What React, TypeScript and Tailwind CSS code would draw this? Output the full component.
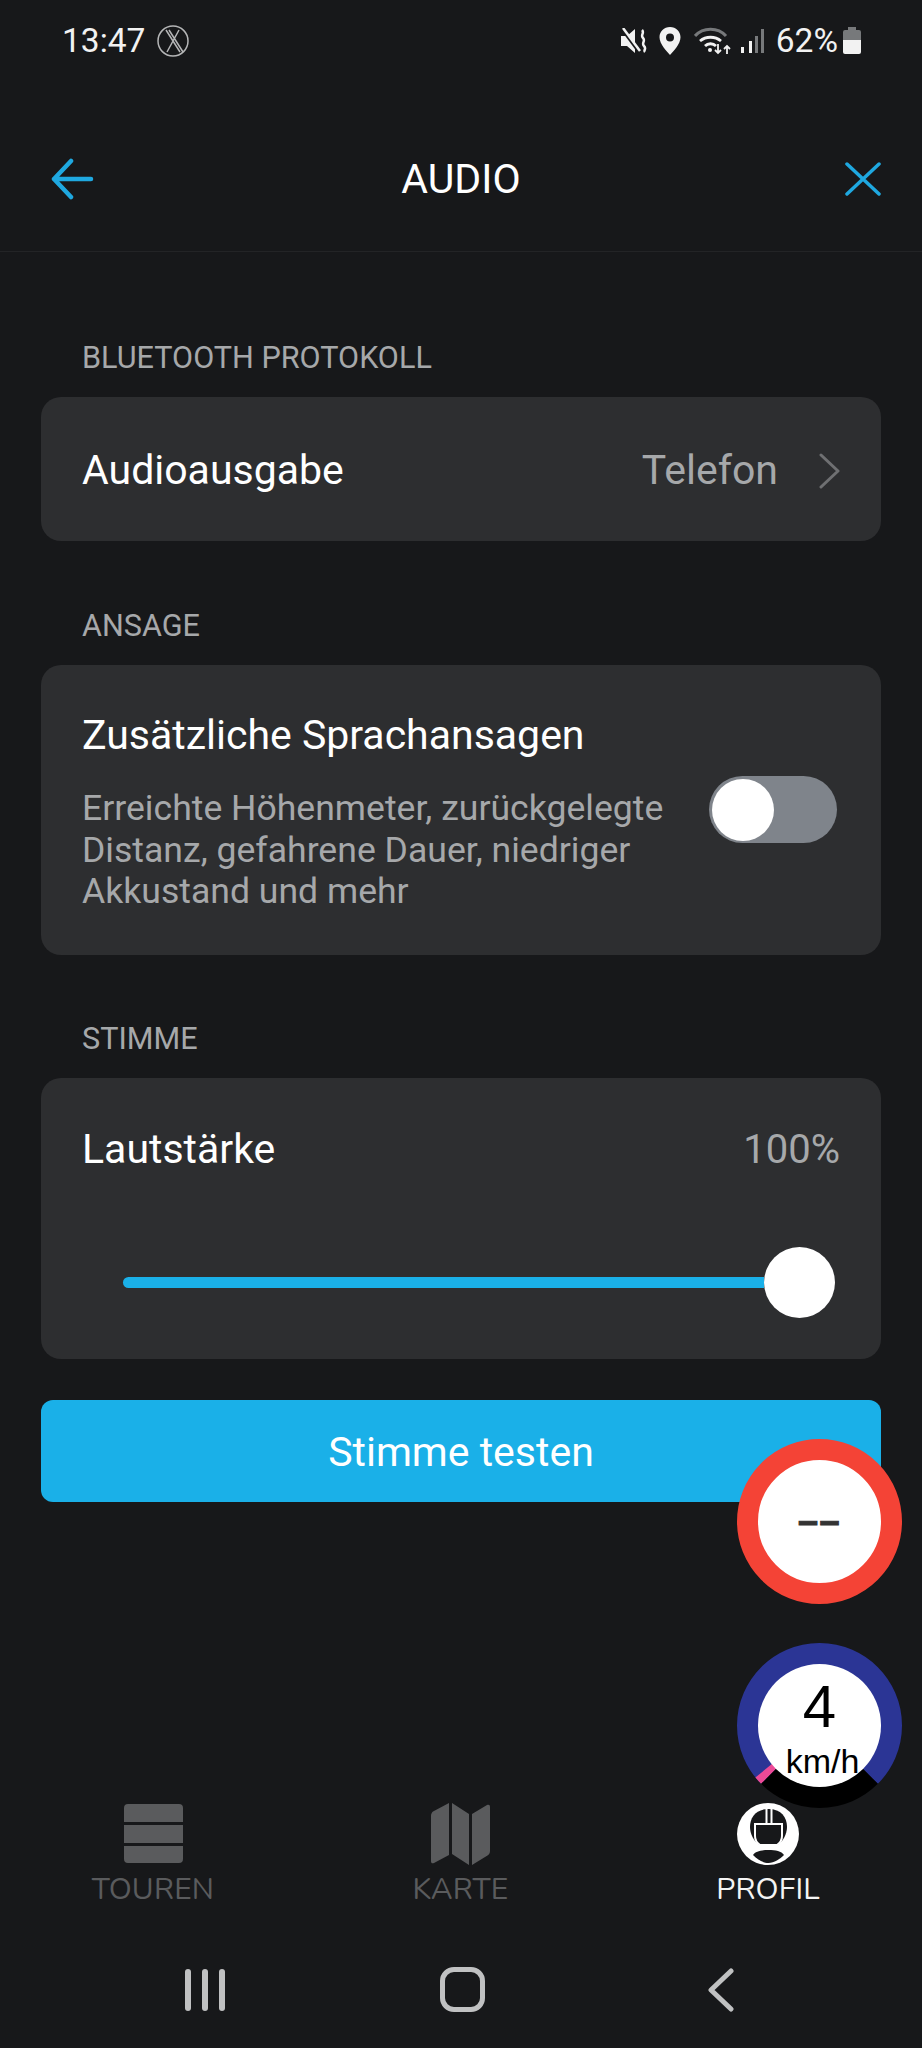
const SANS = "font-['Roboto','Liberation_Sans',sans-serif]";

function polar(r: number, deg: number) {
  // 0deg points straight down, positive goes clockwise
  const a = (deg * Math.PI) / 180;
  return [50 - r * Math.sin(a), 50 + r * Math.cos(a)].map((n) => n.toFixed(3)).join(" ");
}

function arc(from: number, to: number, r = 43.35) {
  const large = to - from > 180 ? 1 : 0;
  return `M${polar(r, to)} A${r} ${r} 0 ${large} 0 ${polar(r, from)}`;
}

function StatusIcons() {
  return (
    <div className="flex items-center">
      <svg width="27" height="26" viewBox="0 0 27 26" className="ml-[1px]">
        <path d="M1 8h6l8-7v24l-8-7H1z" fill="#f2f2f2" />
        <path d="M2 1l17 23" stroke="#17181a" strokeWidth="3" />
        <path d="M3 0l17 23" stroke="#f2f2f2" strokeWidth="2.500" />
        <path d="M22 2c3 3-2 5 1 8s-2 5 1 8-1 4 1 6" stroke="#f2f2f2" strokeWidth="2.500" fill="none" />
      </svg>
      <svg width="22" height="28" viewBox="0 0 22 28" className="ml-[12px]">
        <path fillRule="evenodd" d="M11 0c6 0 10.500 4.500 10.500 10.200C21.500 17 14 24.500 11 28 8 24.500 .5 17 .5 10.200.5 4.500 5 0 11 0zm0 6.500a4 4 0 100 8 4 4 0 000-8z" fill="#f2f2f2" />
      </svg>
      <svg width="38" height="28" viewBox="0 0 38 28" className="ml-[13px]" fill="none">
        <path d="M1 9C9 0 24 0 32 9" stroke="#77797b" strokeWidth="3" />
        <path d="M6 14c6-5 15-5 21 0" stroke="#f2f2f2" strokeWidth="2.800" />
        <path d="M11 19c3-3 8-3 11 0" stroke="#f2f2f2" strokeWidth="2.800" />
        <circle cx="16" cy="23" r="2" fill="#f2f2f2" />
        <path d="M24 17v9m-3-3l3 3 3-3M33 27v-8m-3 3l3-3 3 3" stroke="#f2f2f2" strokeWidth="1.800" />
      </svg>
      <svg width="24" height="26" viewBox="0 0 24 26" className="ml-[8px]">
        <rect x="1" y="19" width="3" height="6" fill="#f2f2f2" />
        <rect x="9" y="13" width="3" height="12" fill="#f2f2f2" />
        <rect x="15" y="8" width="3" height="17" fill="#77797b" />
        <rect x="21" y="1" width="3" height="24" fill="#77797b" />
      </svg>
      <span className="ml-[12px] text-[33.500px] leading-none text-[#f2f2f2]">62%</span>
      <svg width="18" height="27" viewBox="0 0 18 27" className="ml-[5px]">
        <path d="M5 0h8v3h3a2 2 0 012 2v8H0V5a2 2 0 012-2h3z" fill="#77797b" />
        <path d="M0 13h18v12a2 2 0 01-2 2H2a2 2 0 01-2-2z" fill="#f2f2f2" />
      </svg>
    </div>
  );
}

function SectionLabel({ children }: { children: string }) {
  return <div className="h-[40px] mb-[19px] pl-[82px] text-[30.600px] leading-[40px] text-[#a6a8aa]">{children}</div>;
}

function SpeedGauge() {
  return (
    <div className="absolute left-[737px] top-[1643px] w-[165px] h-[165px] rounded-full">
      <svg viewBox="0 0 100 100" className="absolute inset-0 w-full h-full">
        <path d={arc(45, 315)} stroke="#2b3595" strokeWidth="13.300" fill="none" />
        <path d={arc(45, 51)} stroke="#ec4a97" strokeWidth="13.300" fill="none" />
        <path d={arc(-45, 45)} stroke="#000000" strokeWidth="13.300" fill="none" />
      </svg>
      <div className="absolute left-[21px] top-[21px] w-[123px] h-[123px] rounded-full bg-white text-black text-center font-['Liberation_Sans',sans-serif]">
        <div className="mt-[11px] text-[60px] leading-[64px]">4</div>
        <div className="text-[34px] leading-[36px] mt-[4px] pl-[6px]">km/h</div>
      </div>
    </div>
  );
}

function NavItem({ label, active, children }: { label: string; active?: boolean; children: React.ReactNode }) {
  return (
    <div className="flex flex-col items-center w-[200px]">
      {children}
      <span className={`mt-[8px] text-[30px] leading-[40px] font-['Nunito','Lato',sans-serif] tracking-[0.2px] ${active ? "text-[#f4f4f4]" : "text-[#5a5b5d]"}`}>
        {label}
      </span>
    </div>
  );
}

export default function App() {
  return (
    <div className={`relative h-[2048px] w-[922px] overflow-hidden flex flex-col bg-[#17181a] text-white ${SANS}`}>
      <div className="h-[80px] flex items-center justify-between pl-[62px] pr-[61px] pt-[1px]">
        <div className="flex items-center">
          <span className="text-[33.500px] leading-none text-[#f2f2f2]">13:47</span>
          <svg width="32" height="32" viewBox="0 0 32 32" className="ml-[12px]" fill="none" stroke="#b5b6b7">
            <circle cx="16" cy="16" r="15" strokeWidth="1.500" />
            <path d="M9 5l14 22M22 5L10 27M12 5l14 22" strokeWidth="1.500" />
          </svg>
        </div>
        <StatusIcons />
      </div>

      <div className="h-[172px] pt-[26px] flex items-center justify-between border-b border-[#232426] pl-[50px] pr-[41px]">
        <div className="w-[44px]">
          <svg width="44" height="42" viewBox="0 0 44 42" fill="none" stroke="#1fa8e0" strokeWidth="4.500" strokeLinecap="round" strokeLinejoin="round">
            <path d="M21 3L4 21l17 18M4 21h37" />
          </svg>
        </div>
        <span className="mt-[2px] ml-[-17px] text-[41px] leading-none text-white">AUDIO</span>
        <svg width="36" height="34" viewBox="0 0 36 34" fill="none" stroke="#1fa8e0" strokeWidth="3.500" strokeLinecap="round">
          <path d="M2 2l32 30M34 2L2 32" />
        </svg>
      </div>

      <main className="flex-1 pt-[86px]">
        <SectionLabel>BLUETOOTH PROTOKOLL</SectionLabel>
        <div className="mx-[41px] h-[144px] pt-[3px] rounded-[20px] bg-[#2d2e30] flex items-center pl-[41px] pr-[41px]">
          <span className="flex-1 text-[41px] text-white">Audioausgabe</span>
          <span className="text-[41px] text-[#a6a8aa]">Telefon</span>
          <svg width="22" height="36" viewBox="0 0 22 36" fill="none" stroke="#6f7072" strokeWidth="3" strokeLinecap="round" strokeLinejoin="round" className="ml-[40px]">
            <path d="M3 2l17 16L3 34" />
          </svg>
        </div>

        <div className="h-[65px]" />
        <SectionLabel>ANSAGE</SectionLabel>
        <div className="mx-[41px] h-[290px] rounded-[20px] bg-[#2d2e30] pl-[41px] pr-[44px] pt-[46px]">
          <div className="text-[41px] leading-[48px] text-white">Zusätzliche Sprachansagen</div>
          <div className="mt-[29px] flex items-start justify-between">
            <p className="w-[610px] text-[35.600px] leading-[41.500px] text-[#a6a8aa]">
              Erreichte Höhenmeter, zurückgelegte Distanz, gefahrene Dauer, niedriger Akkustand und mehr
            </p>
            <div className="mt-[-12px] w-[128px] h-[67px] rounded-full bg-[#7f848b] flex items-center pl-[3px]">
              <div className="w-[62px] h-[62px] rounded-full bg-white" />
            </div>
          </div>
        </div>

        <div className="h-[64px]" />
        <SectionLabel>STIMME</SectionLabel>
        <div className="mx-[41px] h-[281px] rounded-[20px] bg-[#2d2e30] px-[41px] pt-[48px]">
          <div className="flex justify-between items-center h-[48px]">
            <span className="text-[41px] text-white">Lautstärke</span>
            <span className="text-[40px] text-[#a6a8aa]">100%</span>
          </div>
          <div className="mt-[73px] ml-[41px] mr-[5px] flex items-center">
            <div className="flex-1 h-[11px] rounded-l-full bg-[#1ab0e8]" />
            <div className="w-[71px] h-[71px] rounded-full bg-white" />
          </div>
        </div>

        <button className="mt-[41px] mx-[41px] block w-[840px] h-[102px] pt-[3px] rounded-[12px] bg-[#1ab0e8] text-[41px] text-white">
          Stimme testen
        </button>
      </main>

      <nav className="flex justify-between pl-[53px] pr-[54px] h-[164px]">
        <NavItem label="TOUREN">
          <svg width="59" height="59" viewBox="0 0 59 59" fill="#5a5b5d" className="mt-[1px] mb-[-1px]">
            <path d="M4 0h51a4 4 0 014 4v14H0V4a4 4 0 014-4zM0 21h59v18H0zM0 42h59v13a4 4 0 01-4 4H4a4 4 0 01-4-4z" />
          </svg>
        </NavItem>
        <NavItem label="KARTE">
          <svg width="59" height="62" viewBox="0 0 59 62" fill="#5a5b5d" className="mb-[-3px]">
            <path d="M18 0v52L3 60c-2 .8-3 0-3-2V13c0-2 .8-3.500 2-4.500zM21 0l17 11v51l-17-11zM41 11L56 2c2-.8 3 0 3 2v44c0 2-1 3.500-2.500 4.500L41 62z" />
          </svg>
        </NavItem>
        <NavItem label="PROFIL" active>
          <svg width="62" height="62" viewBox="0 0 62 62" className="mb-[-3px]">
            <circle cx="31" cy="31" r="31" fill="#fff" />
            <path d="M31.500 6C19 6 13 14 13 24c0 7 4 14 9 18h19c5-4 9-11 9-18 0-10-6-18-18.500-18z" fill="#17181a" />
            <path d="M18 21h27v12c0 4-2 7-5 9H23c-3-2-5-5-5-9z" fill="#17181a" stroke="#fff" strokeWidth="2" />
            <path d="M29.500 6v15M34.500 6v15" stroke="#fff" strokeWidth="2" />
            <path d="M31.500 47c7 0 13 1 15.500 5-4 4-10 8-15.500 8S20 56 16 52c2.500-4 8.500-5 15.500-5z" fill="#17181a" />
          </svg>
        </NavItem>
      </nav>

      <div className="h-[81px] flex items-start justify-between pl-[185px] pr-[188px]">
        <div className="flex gap-[11px] pt-[2px]">
          <div className="w-[6px] h-[42px] rounded-full bg-[#c0c1c2]" />
          <div className="w-[6px] h-[42px] rounded-full bg-[#c0c1c2]" />
          <div className="w-[6px] h-[42px] rounded-full bg-[#c0c1c2]" />
        </div>
        <div className="ml-[-8px] w-[45px] h-[45px] rounded-[14px] border-[5px] border-[#c0c1c2]" />
        <svg width="26" height="44" viewBox="0 0 26 44" fill="none" stroke="#c0c1c2" strokeWidth="5" strokeLinecap="round" strokeLinejoin="round" className="mt-[1px]">
          <path d="M23 3L3 22l20 19" />
        </svg>
      </div>

      <div className="absolute left-[737px] top-[1439px] w-[165px] h-[165px] rounded-full border-[21px] border-[#f44336] bg-white flex items-center justify-center">
        <span className="mt-[-1px] text-[36px] tracking-[1.500px] leading-none font-bold text-[#333333] [-webkit-text-stroke:1px_#333333] font-['Liberation_Sans',sans-serif]">––</span>
      </div>
      <SpeedGauge />
    </div>
  );
}
